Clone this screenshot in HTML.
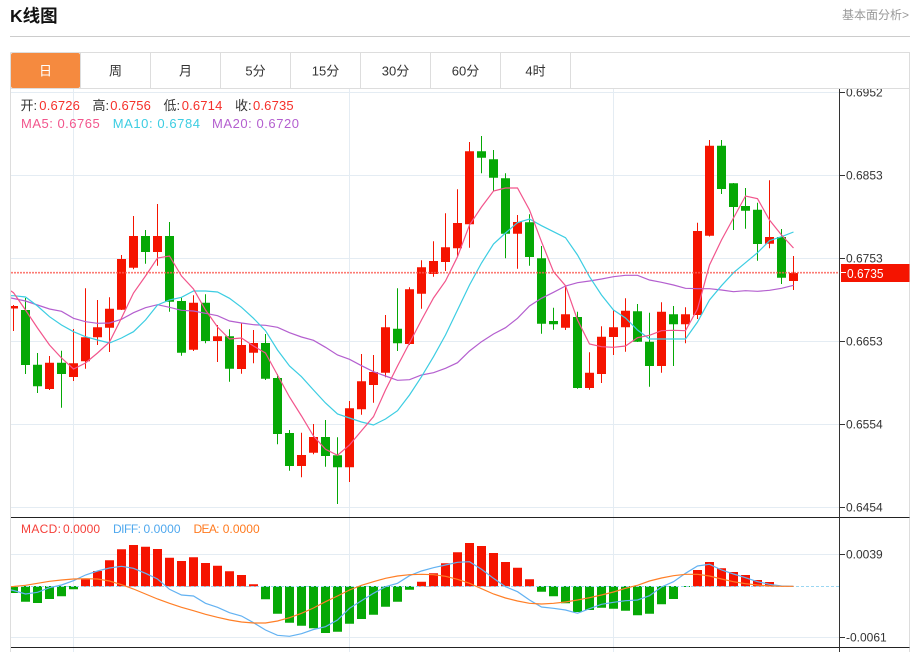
<!DOCTYPE html>
<html lang="zh">
<head>
<meta charset="utf-8">
<title>K线图</title>
<style>
html,body{margin:0;padding:0;background:#fff;width:916px;height:652px;overflow:hidden}
svg{position:absolute;left:0;top:0;display:block}
text{font-family:"Liberation Sans","Noto Sans CJK SC",sans-serif}
</style>
</head>
<body>
<svg xmlns="http://www.w3.org/2000/svg" width="916" height="652" viewBox="0 0 916 652">
<defs>
<clipPath id="c"><rect x="11" y="89" width="828" height="428"/></clipPath>
<clipPath id="m"><rect x="11" y="518" width="828" height="129"/></clipPath>
<clipPath id="a"><rect x="840" y="89" width="70" height="428"/></clipPath>
</defs>

<!-- header -->
<text x="10" y="22" font-size="17.5" font-weight="700" fill="#111">K线图</text>
<text x="842" y="19" font-size="12" fill="#999">基本面分析&gt;</text>
<path d="M10 36.5H910" stroke="#ccc" fill="none"/>

<!-- frame & tabs -->
<path d="M10.5 52.5H909.5V652M10.5 52.5V652M10.5 88.5H909.5" stroke="#ddd" fill="none"/>
<rect x="11" y="53" width="69" height="35" rx="2" fill="#f58a3f"/>
<path d="M80.5 53V88M150.5 53V88M220.5 53V88M290.5 53V88M360.5 53V88M430.5 53V88M500.5 53V88M570.5 53V88" stroke="#ddd" fill="none"/>
<g font-size="13" text-anchor="middle" fill="#333">
<text x="45.5" y="75.5" fill="#fff">日</text>
<text x="115.5" y="75.5">周</text>
<text x="185.5" y="75.5">月</text>
<text x="255.5" y="75.5">5分</text>
<text x="325.5" y="75.5">15分</text>
<text x="395.5" y="75.5">30分</text>
<text x="465.5" y="75.5">60分</text>
<text x="535.5" y="75.5">4时</text>
</g>

<!-- grid -->
<path d="M11 92.5H839M11 175.5H839M11 258.5H839M11 341.5H839M11 424.5H839M11 507.5H839M11 554.5H839M11 637.5H839M73.5 89V652M349.5 89V652M613.5 89V652" stroke="#e4ecf3" fill="none"/>

<!-- candles -->
<g clip-path="url(#c)">
<path fill="#f51400" d="M13 305h1V331h-1zM9 306h9V308.5h-9z
M49 356h1V390h-1zM45 362.7h9V389h-9z
M73 329h1V381h-1zM69 363.3h9V377h-9z
M85 288.3h1V368.7h-1zM81 337.3h9V361.3h-9z
M97 300h1V345h-1zM93 327.3h9V337.3h-9z
M109 297.3h1V352h-1zM105 308.7h9V327.7h-9z
M121 255h1V310h-1zM117 259h9V309.7h-9z
M133 216h1V269.3h-1zM129 236h9V267.7h-9z
M157 204h1V265.7h-1zM153 236h9V252h-9z
M193 295.3h1V351h-1zM189 302.7h9V349.7h-9z
M217 325h1V362h-1zM213 336.3h9V341h-9z
M241 323.3h1V373.7h-1zM237 345h9V369h-9z
M253 330h1V363.3h-1zM249 343h9V352.7h-9z
M301 432.7h1V477.3h-1zM297 455h9V466h-9z
M313 424h1V454.3h-1zM309 437h9V452.7h-9z
M349 401h1V482h-1zM345 408.3h9V467.3h-9z
M361 354h1V414.7h-1zM357 381.3h9V409.3h-9z
M373 355h1V402.7h-1zM369 372h9V385h-9z
M385 315h1V377.3h-1zM381 327.3h9V372.7h-9z
M409 287.3h1V345h-1zM405 289.3h9V344h-9z
M421 260.3h1V308.7h-1zM417 267.3h9V293.7h-9z
M433 241.3h1V276.7h-1zM429 261h9V274h-9z
M445 213.3h1V271h-1zM441 247.3h9V262h-9z
M457 189.3h1V256.7h-1zM453 223h9V248.3h-9z
M469 142h1V247.7h-1zM465 151.3h9V224.3h-9z
M517 215h1V268.7h-1zM513 222h9V233.7h-9z
M565 285.7h1V330h-1zM561 314.3h9V327.7h-9z
M589 352.3h1V389.7h-1zM585 372.7h9V388h-9z
M601 326.3h1V383h-1zM597 336.7h9V374h-9z
M613 310h1V355h-1zM609 327.3h9V337h-9z
M625 298.3h1V351.7h-1zM621 310.7h9V327.3h-9z
M661 302.3h1V372.7h-1zM657 311.7h9V366h-9z
M685 307.3h1V343.3h-1zM681 314.3h9V324.3h-9z
M697 222.7h1V319h-1zM693 231h9V315h-9z
M709 140h1V236.5h-1zM705 145.7h9V235.7h-9z
M769 180.3h1V248.3h-1zM765 237h9V243.7h-9z
M793 256h1V290h-1zM789 273h9V281h-9z"/>
<path fill="#05a805" d="M25 298h1V374h-1zM21 310h9V365h-9z
M37 353h1V393h-1zM33 364.7h9V386.3h-9z
M61 350.7h1V407.7h-1zM57 362.7h9V374h-9z
M145 230h1V263.7h-1zM141 236h9V252h-9z
M169 222h1V311.7h-1zM165 236h9V301.7h-9z
M181 297.3h1V355.7h-1zM177 301h9V352.7h-9z
M205 294.3h1V343.3h-1zM201 302.7h9V341h-9z
M229 329.3h1V381.7h-1zM225 336.3h9V368.7h-9z
M265 334h1V380h-1zM261 343h9V378.7h-9z
M277 374h1V444.3h-1zM273 378h9V434h-9z
M289 430h1V470.7h-1zM285 433h9V466h-9z
M325 420h1V466.7h-1zM321 437h9V456h-9z
M337 437.3h1V504h-1zM333 455.3h9V467.3h-9z
M397 288.3h1V351h-1zM393 328.7h9V343.3h-9z
M481 136h1V173.3h-1zM477 151.3h9V157.7h-9z
M493 150h1V190.7h-1zM489 159.3h9V177.7h-9z
M505 173.3h1V258.3h-1zM501 178.3h9V233.7h-9z
M529 214.3h1V265.7h-1zM525 222.3h9V257h-9z
M541 246h1V333.7h-1zM537 258.3h9V323.7h-9z
M553 307.7h1V329.7h-1zM549 321h9V324.3h-9z
M577 311.7h1V388.7h-1zM573 317h9V388h-9z
M637 304h1V342h-1zM633 311.3h9V341.7h-9z
M649 312.7h1V386.7h-1zM645 341.7h9V366h-9z
M673 306h1V366h-1zM669 314.3h9V324.3h-9z
M721 140h1V194h-1zM717 145.7h9V189h-9z
M733 183h1V230h-1zM729 183.3h9V207h-9z
M745 188h1V228.7h-1zM741 206h9V210.7h-9z
M757 202.7h1V260.7h-1zM753 209.7h9V244h-9z
M781 229h1V284h-1zM777 237h9V277.7h-9z"/>

<!-- MA20 -->
<polyline fill="none" stroke="#b45fcf" stroke-width="1.2" points="1.5,296 13.5,298.5 25.5,301 37.5,305 49.5,309 61.5,311.3 73.5,318.3 85.5,321.7 97.5,323.3 109.5,323 121.5,319.3 133.5,312.7 145.5,307.7 157.5,304.7 169.5,307.3 181.5,310.3 193.5,311 205.5,313.3 217.5,315.7 229.5,321 241.5,323 253.5,324.7 265.5,325.3 277.5,327.3 289.5,332.7 301.5,337 313.5,340.3 325.5,347.3 337.5,355 349.5,359.3 361.5,365.7 373.5,371.7 385.5,376 397.5,380.3 409.5,379.7 421.5,375 433.5,372.7 445.5,368.3 457.5,362.7 469.5,351 481.5,341.7 493.5,334 505.5,327.7 517.5,318.3 529.5,306 541.5,298.3 553.5,292.3 565.5,286 577.5,282.7 589.5,281 601.5,279 613.5,276.7 625.5,275.3 637.5,275.3 649.5,280 661.5,282.3 673.5,285 685.5,288.3 697.5,288.7 709.5,288.7 721.5,290 733.5,291.7 745.5,290.7 757.5,291.3 769.5,290.3 781.5,288.3 793.5,285.3"/>
<!-- MA10 -->
<polyline fill="none" stroke="#3ccde2" stroke-width="1.2" points="1.5,295.7 13.5,295.7 25.5,297 37.5,306 49.5,316.7 61.5,325 73.5,331.7 85.5,336.7 97.5,340 109.5,343 121.5,338 133.5,331.7 145.5,320 157.5,305 169.5,300 181.5,297.3 193.5,291 205.5,291 217.5,292 229.5,298.3 241.5,307.3 253.5,318.3 265.5,330.7 277.5,350 289.5,366 301.5,376.7 313.5,390 325.5,403 337.5,414 349.5,418 361.5,422 373.5,425 385.5,419 397.5,410.7 409.5,395 421.5,376.7 433.5,356.7 445.5,335 457.5,310 469.5,285 481.5,263 493.5,244 505.5,233 517.5,222.7 529.5,219 541.5,225.7 553.5,231.7 565.5,237.7 577.5,255 589.5,276.7 601.5,295 613.5,310 625.5,318 637.5,330 649.5,339 661.5,339 673.5,339 685.5,339 697.5,322 709.5,300 721.5,285.7 733.5,272.7 745.5,262.7 757.5,252.7 769.5,240.7 781.5,236.7 793.5,232"/>
<!-- MA5 -->
<polyline fill="none" stroke="#f2558c" stroke-width="1.2" points="1.5,287 11,291 13.5,292.7 25.5,310 37.5,328 49.5,345 61.5,358 73.5,369 85.5,363 97.5,353 109.5,342 121.5,318 133.5,293 145.5,276 157.5,258 169.5,256 181.5,276 193.5,289 205.5,310 217.5,327 229.5,339 241.5,338 253.5,346 265.5,353 277.5,375 289.5,397 301.5,416 313.5,436 325.5,449.3 337.5,455.3 349.5,445 361.5,430.7 373.5,416.7 385.5,390 397.5,366 409.5,343 421.5,320 433.5,298 445.5,281 457.5,256.7 469.5,225 481.5,207 493.5,191 505.5,188 517.5,188 529.5,210 541.5,241.7 553.5,271.7 565.5,285.7 577.5,320 589.5,344 601.5,346.7 613.5,347.3 625.5,346 637.5,337.7 649.5,335.3 661.5,330.7 673.5,330.3 685.5,330.7 697.5,309 709.5,265 721.5,240 733.5,218 745.5,196 757.5,198.7 769.5,220 781.5,235 793.5,248"/>
</g>

<!-- current price line -->
<path d="M11 272.7H839" stroke="#fb5a50" stroke-width="1.6" stroke-dasharray="2 1" opacity=".8" fill="none"/>

<!-- MACD bars -->
<g clip-path="url(#m)">
<path fill="#05a805" d="M9 586h9V593h-9zM21 586h9V601.7h-9zM33 586h9V603h-9zM45 586h9V599h-9zM57 586h9V596.3h-9zM69 586h9V589.3h-9zM261 586h9V599.3h-9zM273 586h9V613.7h-9zM285 586h9V622.7h-9zM297 586h9V625.7h-9zM309 586h9V628.3h-9zM321 586h9V633h-9zM333 586h9V631.7h-9zM345 586h9V623.7h-9zM357 586h9V619h-9zM369 586h9V614.7h-9zM381 586h9V606.7h-9zM393 586h9V601.7h-9zM405 586h9V589.7h-9zM537 586h9V591.7h-9zM549 586h9V596.3h-9zM561 586h9V603.3h-9zM573 586h9V612h-9zM585 586h9V610h-9zM597 586h9V607.7h-9zM609 586h9V608.7h-9zM621 586h9V610.7h-9zM633 586h9V615.3h-9zM645 586h9V613.7h-9zM657 586h9V604.3h-9zM669 586h9V599h-9zM681 586h9V587h-9z"/>
<path fill="#f51400" d="M81 579.3h9V586.5h-9zM93 571h9V586.5h-9zM105 560.3h9V586.5h-9zM117 549.3h9V586.5h-9zM129 545h9V586.5h-9zM141 546.7h9V586.5h-9zM153 549h9V586.5h-9zM165 557.7h9V586.5h-9zM177 561h9V586.5h-9zM189 557.3h9V586.5h-9zM201 563h9V586.5h-9zM213 565.7h9V586.5h-9zM225 571.3h9V586.5h-9zM237 575h9V586.5h-9zM249 584.3h9V586.5h-9zM417 581.7h9V586.5h-9zM429 573.3h9V586.5h-9zM441 563.3h9V586.5h-9zM453 552.3h9V586.5h-9zM465 543h9V586.5h-9zM477 546h9V586.5h-9zM489 553h9V586.5h-9zM501 562h9V586.5h-9zM513 567.7h9V586.5h-9zM525 579.3h9V586.5h-9zM693 570h9V586.5h-9zM705 562h9V586.5h-9zM717 568.3h9V586.5h-9zM729 572h9V586.5h-9zM741 575h9V586.5h-9zM753 580h9V586.5h-9zM765 582h9V586.5h-9zM777 585.7h9V586.5h-9z"/>
<path d="M11 586.5H839" stroke="#9ad6f2" stroke-dasharray="3 2" fill="none"/>
<polyline fill="none" stroke="#63b2f2" stroke-width="1.2" points="1.5,588 13.5,590.5 25.5,594 37.5,592.3 49.5,587.7 61.5,585 73.5,580.7 85.5,575 97.5,571 109.5,568 121.5,566.3 133.5,568.3 145.5,573.3 157.5,579 169.5,589.3 181.5,595 193.5,596 205.5,603.3 217.5,607.3 229.5,612.7 241.5,616 253.5,622.7 265.5,630 277.5,635.3 289.5,636.3 301.5,633.7 313.5,629.5 325.5,626.7 337.5,620 349.5,608.3 361.5,600.7 373.5,593.3 385.5,586.7 397.5,583.3 409.5,575.7 421.5,571 433.5,567.7 445.5,565 457.5,562.3 469.5,561.7 481.5,569.3 493.5,578.3 505.5,586.7 517.5,591.7 529.5,600 541.5,607 553.5,608.3 565.5,610 577.5,613.3 589.5,608.7 601.5,604.3 613.5,602.3 625.5,600.7 637.5,600 649.5,595.7 661.5,587 673.5,581.7 685.5,573.3 697.5,566 709.5,564.3 721.5,570 733.5,574 745.5,577.7 757.5,581.7 769.5,584.3 781.5,586 793.5,586.3"/>
<polyline fill="none" stroke="#ff7f27" stroke-width="1.2" points="1.5,587 13.5,586.5 25.5,585.3 37.5,583.3 49.5,581.3 61.5,580 73.5,579 85.5,578.7 97.5,579 109.5,581 121.5,584.7 133.5,589 145.5,594 157.5,599 169.5,603.3 181.5,607.3 193.5,610.7 205.5,614.3 217.5,617.3 229.5,620 241.5,622 253.5,623 265.5,623 277.5,621 289.5,617.7 301.5,613.3 313.5,608 325.5,601.7 337.5,596 349.5,590 361.5,585.3 373.5,581.7 385.5,578.3 397.5,576 409.5,574.7 421.5,574.3 433.5,574.7 445.5,576.3 457.5,579.3 469.5,583.3 481.5,588.7 493.5,594 505.5,598 517.5,601 529.5,603.3 541.5,604 553.5,603.3 565.5,602 577.5,600 589.5,597.7 601.5,595 613.5,592 625.5,588.3 637.5,585.3 649.5,581 661.5,578 673.5,575.7 685.5,574.3 697.5,574.3 709.5,576 721.5,579 733.5,581.7 745.5,583.7 757.5,585 769.5,586 781.5,586.3 793.5,586.3"/>
</g>

<!-- panel borders & axis -->
<path d="M11 517.5H909.5M11 647.5H909.5" stroke="#222" fill="none"/>
<path d="M839.5 89V652" stroke="#333" fill="none"/>
<path d="M840 92.5H845M840 175.5H845M840 258.5H845M840 341.5H845M840 424.5H845M840 507.5H845M840 554.5H845M840 637.5H845" stroke="#333" fill="none"/>

<g font-size="12" fill="#333">
<g clip-path="url(#a)"><text x="846" y="96.5">0.6952</text></g>
<text x="846" y="179.5">0.6853</text>
<text x="846" y="262.5">0.6753</text>
<text x="846" y="345.5">0.6653</text>
<text x="846" y="428.5">0.6554</text>
<text x="846" y="511.5">0.6454</text>
<text x="846" y="558.5">0.0039</text>
<text x="846" y="641.5">-0.0061</text>
</g>

<!-- price label -->
<rect x="841" y="264" width="68.5" height="18" fill="#f51400"/>
<path d="M841 272.5H846" stroke="#fff" fill="none"/>
<text x="847" y="278" font-size="13" fill="#fff" textLength="36.5" lengthAdjust="spacingAndGlyphs">0.6735</text>

<!-- legends -->
<g font-size="13">
<text x="20.5" y="110" fill="#333">开:</text><text x="39.3" y="110" fill="#f5302a" textLength="40.6" lengthAdjust="spacing">0.6726</text>
<text x="92.5" y="110" fill="#333">高:</text><text x="110.3" y="110" fill="#f5302a" textLength="40.6" lengthAdjust="spacing">0.6756</text>
<text x="163.5" y="110" fill="#333">低:</text><text x="181.7" y="110" fill="#f5302a" textLength="40.6" lengthAdjust="spacing">0.6714</text>
<text x="235" y="110" fill="#333">收:</text><text x="253" y="110" fill="#f5302a" textLength="40.6" lengthAdjust="spacing">0.6735</text>
<text x="21" y="128" fill="#f2558c" textLength="78.7" lengthAdjust="spacing">MA5: 0.6765</text>
<text x="112.7" y="128" fill="#3ccde2" textLength="87.3" lengthAdjust="spacing">MA10: 0.6784</text>
<text x="212" y="128" fill="#b45fcf" textLength="87" lengthAdjust="spacing">MA20: 0.6720</text>
</g>
<g font-size="12">
<text x="21" y="533" fill="#f5403a" textLength="40" lengthAdjust="spacing">MACD:</text><text x="63" y="533" fill="#f5403a" textLength="37" lengthAdjust="spacing">0.0000</text>
<text x="113" y="533" fill="#4fa8ee" textLength="28" lengthAdjust="spacing">DIFF:</text><text x="143.5" y="533" fill="#4fa8ee" textLength="37" lengthAdjust="spacing">0.0000</text>
<text x="193.5" y="533" fill="#ff7a1f" textLength="26" lengthAdjust="spacing">DEA:</text><text x="222.7" y="533" fill="#ff7a1f" textLength="37" lengthAdjust="spacing">0.0000</text>
</g>
</svg>
</body>
</html>
